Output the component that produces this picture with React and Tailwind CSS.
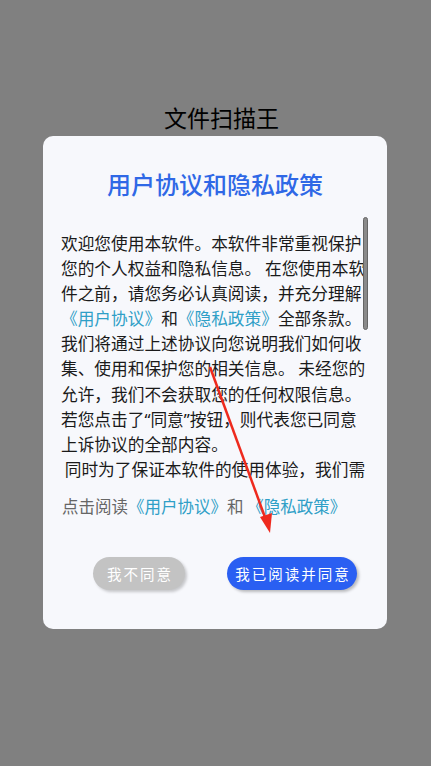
export default function App() {
  const q = (c) => (
    <span style={{ fontFamily: '"Noto Sans", sans-serif' }}>{c}</span>
  );
  const lines = [
    ["欢迎您使用本软件。本软件非常重视保护"],
    ["您的个人权益和隐私信息。 在您使用本软"],
    ["件之前，请您务必认真阅读，并充分理解"],
    [
      <span key="a" className="text-[#2f9fc7]">《用户协议》</span>,
      "和",
      <span key="b" className="text-[#2f9fc7]">《隐私政策》</span>,
      "全部条款。",
    ],
    ["我们将通过上述协议向您说明我们如何收"],
    ["集、使用和保护您的相关信息。 未经您的"],
    ["允许，我们不会获取您的任何权限信息。"],
    ["若您点击了", q("“"), "同意", q("”"), "按钮，则代表您已同意"],
    ["上诉协议的全部内容。"],
    ["\u00a0同时为了保证本软件的使用体验，我们需"],
  ];
  return (
    <div
      className="relative w-[431px] h-[766px] bg-[#808080] overflow-hidden"
      style={{ fontFamily: '"Noto Sans CJK SC", "Noto Sans", sans-serif' }}
    >
      <div className="pt-[102px] pl-[12px] text-center text-[23px] leading-[30px] text-black">
        文件扫描王
      </div>
      <div className="mx-[43px] mt-[4px] w-[344px] rounded-[10px] bg-[#f7f8fc] pt-[32px] pb-[39px]">
        <div className="text-center text-[24px] leading-[32px] font-medium text-[#2f68e6]">
          用户协议和隐私政策
        </div>
        <div className="relative mt-[16px] h-[266px] overflow-hidden">
          <div className="pl-[18px] pt-[15px] text-[16.7px] leading-[25.1px] text-[#1a1a1a]">
            {lines.map((l, i) => (
              <div key={i} className="whitespace-nowrap">
                {l}
              </div>
            ))}
          </div>
          <div className="absolute left-[320px] top-[1px] h-[113px] w-[5px] rounded-full bg-[#8a8a8a] border border-[#666]" />
        </div>
        <div className="mt-[12px] pl-[19px] text-[16.5px] leading-[24px] text-[#666] whitespace-nowrap">
          点击阅读<span className="text-[#2f9fc7]">《用户协议》</span>和 <span className="text-[#2f9fc7]">《隐私政策》</span>
        </div>
        <div className="mt-[39px] flex items-center">
          <button className="ml-[50px] h-[33px] w-[92px] rounded-full bg-[#c3c3c3] text-[14.5px] tracking-[2px] whitespace-nowrap pl-[2px] text-white shadow-[2px_2px_3px_rgba(0,0,0,0.2)]">
            我不同意
          </button>
          <button className="ml-[42px] h-[33px] w-[130px] rounded-full bg-[#2a5ff2] text-[14.5px] tracking-[2px] whitespace-nowrap pl-[2px] text-white shadow-[2px_2px_3px_rgba(0,0,0,0.25)]">
            我已阅读并同意
          </button>
        </div>
      </div>
      <svg
        className="absolute left-0 top-0 pointer-events-none"
        width="431"
        height="766"
        viewBox="0 0 431 766"
      >
        <line x1="210" y1="367" x2="266" y2="520" stroke="#ee2a1e" strokeWidth="2.5" />
        <polygon points="270,533 260,517 272,513" fill="#ee2a1e" />
      </svg>
    </div>
  );
}
